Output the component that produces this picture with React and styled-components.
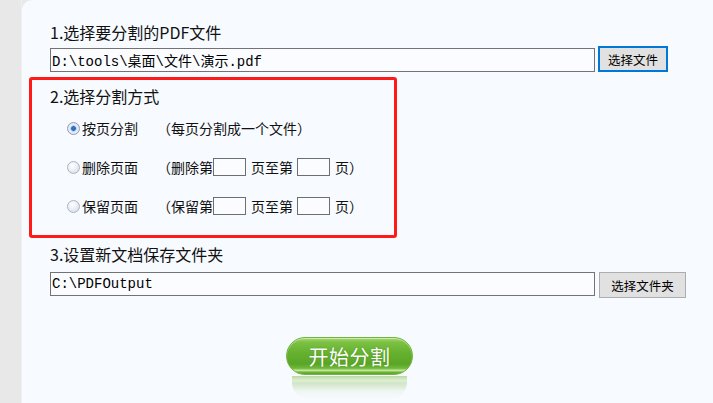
import React from 'react'
import styled, { createGlobalStyle } from 'styled-components'

const GlobalStyle = createGlobalStyle`
  html, body {
    margin: 0;
    padding: 0;
    height: 100%;
    overflow: hidden;
    background: #e9e9e9;
  }
  #root {
    height: 100%;
  }
`

const cjk = `"Noto Sans CJK SC", "Liberation Sans", sans-serif`

const Page = styled.div`
  display: flex;
  height: 100%;
  font-family: ${cjk};
  color: #111;
`

const Strip = styled.div`
  width: 21px;
  flex: none;
  background: #e8e8e8;
  border-right: 1px solid #efefef;
`

const Panel = styled.div`
  flex: 1;
  background: #f7faff;
  border-top-left-radius: 10px;
  padding: 22px 0 0 7px;
`

const Section = styled.div`
  padding-left: 21px;
  margin-top: ${p => p.$top || 0}px;
`

const Heading = styled.div`
  font-size: 16px;
  line-height: 20px;
  height: 20px;
  margin-top: ${p => p.$top || 0}px;
  white-space: nowrap;
`

const PathRow = styled.div`
  display: flex;
  align-items: ${p => p.$align || 'flex-end'};
  margin-top: ${p => p.$top || 0}px;
`

const PathInput = styled.input`
  box-sizing: border-box;
  width: 545px;
  height: 24px;
  margin: 0;
  padding: 0 1px;
  border: 1px solid #737373;
  background: #fafcff;
  font-family: "Liberation Mono", "Noto Sans CJK SC", monospace;
  font-size: 14px;
  color: #000;
  outline: none;
`

const PickButton = styled.button`
  box-sizing: border-box;
  height: 26px;
  width: ${p => p.$w}px;
  margin-left: ${p => p.$gap}px;
  padding: 0;
  background: #e1e1e1;
  border: ${p => (p.$focus ? '2px solid #0078d7' : '1px solid #adadad')};
  font-family: ${cjk};
  font-size: 12.5px;
  color: #000;
`

const RedBox = styled.div`
  box-sizing: border-box;
  width: 368px;
  height: 161px;
  margin-top: 5px;
  border: 3px solid #ff1a1a;
  border-radius: 3px;
  padding: 0 0 0 18px;
  overflow: hidden;
`

const Options = styled.div`
  display: flex;
  flex-direction: column;
  gap: 19px;
  margin-top: 12px;
  padding-left: 17px;
`

const Option = styled.div`
  display: flex;
  align-items: center;
  height: 20px;
  font-size: 14px;
  white-space: nowrap;
`

const Radio = styled.span`
  box-sizing: border-box;
  width: 13px;
  height: 13px;
  border-radius: 50%;
  margin-right: 2px;
  flex: none;
  border: 1px solid ${p => (p.$on ? '#8e9fb8' : '#a9b4c4')};
  background: ${p =>
    p.$on
      ? 'radial-gradient(circle, #2f6fc6 0 2px, #9fbbe3 2.6px, #e9eef6 3.6px, #d5dce8 100%)'
      : 'radial-gradient(circle at 40% 35%, #ffffff 0, #eef1f6 40%, #cfd7e3 100%)'};
`

const OptLabel = styled.span`
  width: 56px;
`

const Hint = styled.span`
  margin-left: 19px;
`

const PageBox = styled.span`
  box-sizing: border-box;
  width: 33px;
  height: 18px;
  border: 1px solid #6e6e6e;
  background: #fafcff;
  margin: 0 5px 0 0;
`

const StartWrap = styled.div`
  margin: 39px 0 0 236px;
  width: 127px;
`

const StartButton = styled.div`
  box-sizing: border-box;
  height: 38px;
  border-radius: 19px;
  border: 1px solid #73b63f;
  background: linear-gradient(
    to bottom,
    #a7da70 0%,
    #7cc143 12%,
    #66b22f 40%,
    #5aa527 72%,
    #6fb83a 84%,
    #c4e89d 90%,
    #6db538 95%,
    #5aa326 100%
  );
  box-shadow: inset 0 1px 0 rgba(255, 255, 255, 0.45);
  display: flex;
  align-items: center;
  justify-content: center;
  color: #fff;
  font-size: 20px;
  letter-spacing: 0.5px;
  text-shadow: 0 0 1px rgba(40, 90, 10, 0.5);
`

const Reflection = styled.div`
  height: 24px;
  margin: 1px 6px 0;
  border-radius: 0 0 18px 18px;
  background: linear-gradient(
    to bottom,
    rgba(110, 175, 60, 0.45) 0%,
    rgba(190, 225, 150, 0.45) 18%,
    rgba(120, 180, 70, 0.3) 30%,
    rgba(200, 225, 180, 0.15) 65%,
    rgba(247, 250, 255, 0) 100%
  );
`

const rows = [
  { label: '删除页面', pre: '（删除第' },
  { label: '保留页面', pre: '（保留第' },
]

export default function App() {
  return (
    <>
      <GlobalStyle />
      <Page>
        <Strip />
        <Panel>
          <Section>
            <Heading>1.选择要分割的PDF文件</Heading>
            <PathRow $top={4}>
              <PathInput defaultValue="D:\tools\桌面\文件\演示.pdf" />
              <PickButton $focus $w={70} $gap={3}>选择文件</PickButton>
            </PathRow>
          </Section>
          <RedBox>
            <Heading $top={6}>2.选择分割方式</Heading>
            <Options>
              <Option>
                <Radio $on />
                <OptLabel>按页分割</OptLabel>
                <Hint>（每页分割成一个文件）</Hint>
              </Option>
              {rows.map(r => (
                <Option key={r.label}>
                  <Radio />
                  <OptLabel>{r.label}</OptLabel>
                  <Hint>{r.pre}</Hint>
                  <PageBox />
                  <span>页至第</span>
                  <PageBox style={{ marginLeft: 4 }} />
                  <span>页）</span>
                </Option>
              ))}
            </Options>
          </RedBox>
          <Section $top={6}>
            <Heading>3.设置新文档保存文件夹</Heading>
            <PathRow $top={8} $align="flex-start">
              <PathInput defaultValue="C:\PDFOutput" />
              <PickButton $w={87} $gap={4}>选择文件夹</PickButton>
            </PathRow>
            <StartWrap>
              <StartButton>开始分割</StartButton>
              <Reflection />
            </StartWrap>
          </Section>
        </Panel>
      </Page>
    </>
  )
}
